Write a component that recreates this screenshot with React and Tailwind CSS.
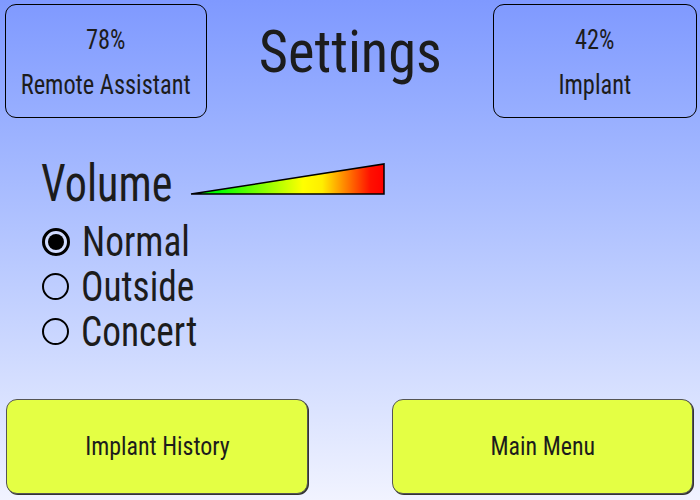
import React, { useState } from "react";

const MODES = ["Normal", "Outside", "Concert"];

function StatusBox({ value, label, className }) {
  return (
    <div className={"h-[114px] border border-black rounded-[11px] flex flex-col items-center pt-[12px] " + className}>
      <span className="text-[28px] leading-[45px] inline-block scale-x-[0.87]">{value}</span>
      <span className="text-[28px] leading-[45px] inline-block scale-x-[0.87]">{label}</span>
    </div>
  );
}

function VolumeRamp() {
  return (
    <svg width="196" height="33" viewBox="0 0 196 33" className="mt-[5px] ml-[1px]">
      <defs>
        <linearGradient id="ramp" x1="0" y1="0" x2="1" y2="0">
          <stop offset="0" stopColor="#00e000" />
          <stop offset="0.14" stopColor="#00ff00" />
          <stop offset="0.58" stopColor="#ffff00" />
          <stop offset="0.68" stopColor="#ffee00" />
          <stop offset="0.93" stopColor="#ff1000" />
          <stop offset="1" stopColor="#ff0000" />
        </linearGradient>
      </defs>
      <polygon points="1,31 194,31 194,1" fill="url(#ramp)" stroke="#000" strokeWidth="1.5" strokeLinejoin="miter" />
    </svg>
  );
}

function Radio({ checked }) {
  if (checked) {
    return (
      <span className="w-[28px] h-[28px] rounded-full border-[3px] border-black bg-white/40 flex items-center justify-center shrink-0">
        <span className="w-[16px] h-[16px] rounded-full bg-black" />
      </span>
    );
  }
  return <span className="w-[27px] h-[27px] rounded-full border-2 border-black shrink-0" />;
}

export default function App() {
  const [mode, setMode] = useState("Normal");

  return (
    <div className="w-[700px] h-[500px] flex flex-col overflow-hidden bg-linear-to-b from-[#7f99ff] to-[#f1f3ff] text-[#1c1c1c] font-['Roboto_Condensed','Roboto',sans-serif]">
      {/* header */}
      <div className="flex items-start pt-[4px] pl-[5px] pr-[3px]">
        <StatusBox value="78%" label="Remote Assistant" className="w-[202px]" />
        <div className="flex-1 flex justify-center pt-[18px]">
          <h1 className="text-[60px] leading-none inline-block scale-x-[0.94]">Settings</h1>
        </div>
        <StatusBox value="42%" label="Implant" className="w-[204px]" />
      </div>

      {/* volume */}
      <div className="pl-[41px] pt-[40px]">
        <div className="flex items-start">
          <span className="w-[148px] text-[52px] leading-none inline-block scale-x-[0.85] origin-left">Volume</span>
          <VolumeRamp />
        </div>
        <div className="flex flex-col pt-[9px]">
          {MODES.map((m) => (
            <button key={m} onClick={() => setMode(m)} className="flex items-center h-[45px] pl-[1px] text-left">
              <Radio checked={mode === m} />
              <span className="ml-[12px] text-[42px] leading-[45px] inline-block scale-x-[0.89] origin-left">{m}</span>
            </button>
          ))}
        </div>
      </div>

      {/* bottom nav */}
      <div className="mt-auto flex justify-between pl-[6px] pr-[7px] pb-[6px]">
        <button className="w-[302px] h-[95px] bg-[#e4ff44] border border-[#555] rounded-[11px] shadow-[1px_1px_0_#333] flex items-center justify-center">
          <span className="text-[26px] inline-block scale-x-[0.92]">Implant History</span>
        </button>
        <button className="w-[301px] h-[95px] bg-[#e4ff44] border border-[#555] rounded-[11px] shadow-[1px_1px_0_#333] flex items-center justify-center">
          <span className="text-[26px] inline-block scale-x-[0.92]">Main Menu</span>
        </button>
      </div>
    </div>
  );
}
